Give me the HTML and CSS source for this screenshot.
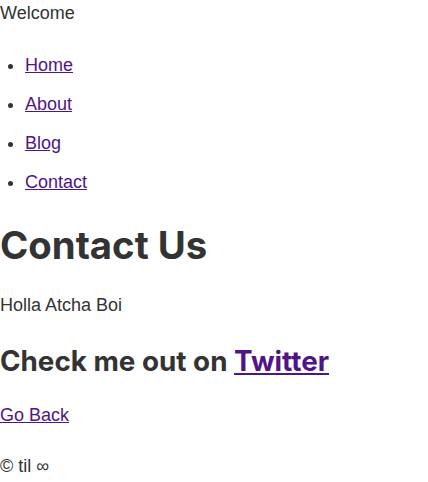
FILE: index.html
```html
<!DOCTYPE html>
<html>
<head>
<meta charset="utf-8">
<link rel="stylesheet" href="styles.css">
</head>
<body>
<header class="site-header">
  <div class="welcome">Welcome</div>
  <ul class="nav">
    <li><a href="#">Home</a></li>
    <li><a href="#">About</a></li>
    <li><a href="#">Blog</a></li>
    <li><a href="#">Contact</a></li>
  </ul>
</header>
<main>
  <h1 class="title">Contact Us</h1>
  <p class="text">Holla Atcha Boi</p>
  <h2 class="subtitle">Check me out on <a href="#">Twitter</a></h2>
  <p class="text"><a href="#">Go Back</a></p>
</main>
<footer class="footer">© til ∞</footer>
</body>
</html>
```
FILE: styles.css
```css
body {
  margin: 0;
  font-family: "Liberation Sans", Arial, sans-serif;
  font-size: 18px;
  line-height: 27px;
  color: #333;
  background: #fff;
}
a { color: #4f1487; }
.welcome { margin: 0; }
.nav {
  margin: 25px 0 0;
  padding-left: 25px;
}
.nav li { margin-bottom: 12px; }
.nav li:last-child { margin-bottom: 0; }
.title {
  font-family: Inter, sans-serif;
  font-weight: 700;
  font-size: 38.3px;
  line-height: 46px;
  margin: 26px 0 0;
}
.text { margin: 24px 0 0; }
.subtitle {
  font-family: Inter, sans-serif;
  font-weight: 700;
  font-size: 27.8px;
  line-height: 34px;
  margin: 25px 0 0;
}
.footer { margin-top: 24px; }
```
